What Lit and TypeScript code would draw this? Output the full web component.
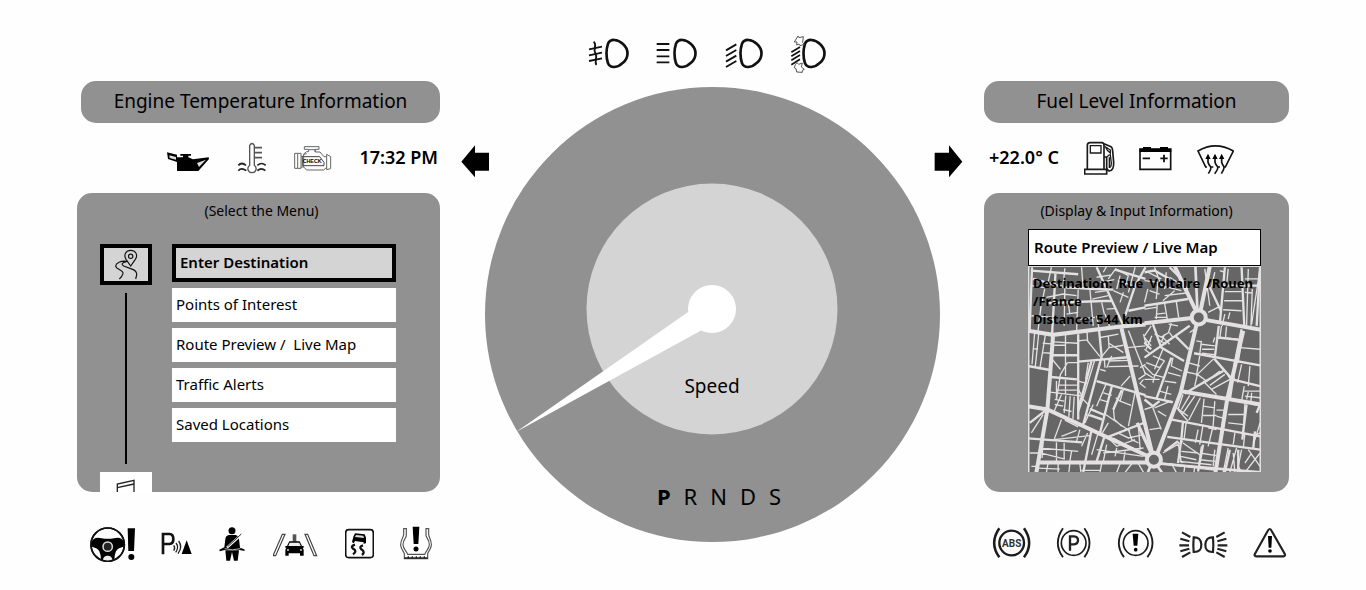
import { LitElement, html, svg, css, TemplateResult } from "lit";
import { customElement, state } from "lit/decorators.js";

const icon = (
  label: string,
  box: [number, number, number, number],
  body: TemplateResult,
) => html`<svg
  class="icon"
  role="img"
  aria-label=${label}
  viewBox=${box.join(" ")}
  width=${box[2] / 3}
  height=${box[3] / 3}
>${body}</svg>`;

const lens = (x: number) => svg`<path d="M${x + 5} 56C${x + 12} 40 ${x + 34} 42 ${x + 50} 57C${x + 68} 73 ${x + 68} 98 ${x + 50} 113C${x + 34} 129 ${x + 12} 131 ${x + 5} 115C${x - 1} 96 ${x - 1} 75 ${x + 5} 56Z" stroke-width="8"/>`;

const fog = icon("Fog lights", [54, 30, 123, 114], svg`<g fill="none" stroke="#111">${lens(109)}
  <path d="M57 73L96 65M57 91L96 83M57 108L96 100" stroke-width="5.5"/>
  <path d="M71 50C83 60 68 72 76 85S72 106 79 120" stroke-width="5.5"/></g>`);
const highBeam = icon("High beam", [258, 30, 126, 114], svg`<g fill="none" stroke="#111">${lens(313)}
  <path d="M260 57H298M260 75H298M260 94H298M260 112H298" stroke-width="5.5"/></g>`);
const lowBeam = icon("Low beam", [462, 30, 114, 114], svg`<g fill="none" stroke="#111">${lens(508)}
  <path d="M465 76L496 58M465 93L496 75M465 110L496 92M465 126L496 108" stroke-width="5.5"/></g>`);
const autoBeam = icon("Automatic headlight levelling", [663, 30, 108, 114], svg`<g fill="none" stroke="#111">${lens(703)}
  <path d="M667 82L693 66M667 94L693 78M667 106L693 90M667 119L693 103" stroke-width="5"/>
  <path d="M676 51L687 33L690 38L703 35L701 53L706 58L693 62L690 57L683 60L684 51Z" stroke-width="3" stroke="#555"/>
  <path d="M679 119L684 113L689 118L700 114L697 126L706 133L700 136V142L683 141L681 131L676 128Z" stroke-width="3" stroke="#555"/></g>`);

const oil = icon("Oil pressure", [291, 204, 132, 96], svg`<path d="M294 235L324 242V250H342V245H334V240H366V245H358V250L372 256L419 250L420 255L388 291H324V264L297 255Z"/>
  <path d="M301 244L321 249V257L302 252Z M384 267L411 257L390 279Z" fill="#ddd"/>`);
const coolant = icon("Coolant temperature", [498, 204, 87, 96], svg`<g fill="none" stroke="#555" stroke-width="4">
  <path d="M536 274V214Q543 203 550 214V274C560 282 555 296 543 296S526 282 536 274Z"/>
  <path d="M550 221H573M550 236H573M550 251H573" stroke-width="5"/>
  <path d="M502 274Q512 263 525 274M502 290Q511 279 526 290M559 274Q572 263 584 274M559 290Q571 279 583 290" stroke="#222" stroke-width="5"/></g>`);
const check = icon("Check engine", [672, 204, 117, 96], svg`<g fill="none" stroke="#666" stroke-width="3">
  <path d="M706 218H750V226H739V234H753L765 248H773V241L785 248V284L773 287V280L764 288H713L704 279H696V283H677V238H696V247H704V240L713 233H719V226H706Z"/>
  <path d="M696 247V280M686 239V282M704 247V279M773 248V280M704 241L713 239M720 227H738V234"/>
  <path d="M700 248H752L765 265V275H700Z" stroke="#444"/></g>
  <text x="701" y="268" font-family="Liberation Sans" font-weight="700" font-size="16">CHECK</text>`);
const arrowLeft = icon("Left turn signal", [1173, 210, 87, 99], svg`<path d="M1174 260L1215 211V233H1257V287H1215V307Z"/>`);
const arrowRight = icon("Right turn signal", [102, 210, 87, 99], svg`<path d="M187 260L147 211V233H104V287H147V307Z"/>`);
const fuel = icon("Fuel", [543, 198, 93, 102], svg`<g fill="none" stroke="#1a1a1a" stroke-width="5">
  <path d="M553 281V211Q553 203 561 203H596Q603 203 603 211V281M545 283H611V297H545Z"/>
  <path d="M562 212H594V234H562Z" stroke-width="4"/>
  <path d="M603 206L624 215Q629 219 629 228L632 262Q633 287 619 288Q612 287 611 277V246H603"/>
  <path d="M608 216L622 225V234L613 226ZM613 246Q616 238 622 240L625 265Q624 278 619 277V247" stroke-width="4"/></g>`);
const battery = icon("Battery", [720, 198, 99, 102], svg`<path d="M723 222H815V283H723Z" fill="none" stroke="#111" stroke-width="5"/>
  <path d="M722 221H732V216H756V221H783V216H807V221H817V231H721Z"/>
  <path d="M731 250H753M784 250H806M795 239V262" stroke="#111" stroke-width="5.500"/>`);
const defrost = icon("Windscreen defrost", [891, 198, 111, 102], svg`<g fill="none" stroke="#111" stroke-width="5">
  <path d="M921 276H917L894 228Q946 197 1000 228L976 276H971"/>
  <path d="M932 276H940M954 276H960" />
  <path d="M924 245V262Q926 269 931 274T925 296M945 245V262Q947 269 952 274T944 296M965 245V262Q967 269 971 274T964 296"/></g>
  <path d="M916 252L924 236L932 252ZM937 252L945 236L953 252ZM957 252L965 236L973 252Z"/>`);

const wheel = icon("Steering fault", [30, 33, 135, 108], svg`<circle cx="83" cy="89" r="50" fill="none" stroke="#111" stroke-width="5"/>
  <path d="M35 80Q43 64 64 70Q83 73 102 70Q123 64 132 80Q137 94 128 96Q114 99 108 109Q104 117 103 134Q83 140 63 134Q62 117 58 109Q52 99 38 96Q30 94 35 80Z"/>
  <path d="M68 137Q70 122 83 122T98 137Q83 141 68 137Z" fill="#eee"/>
  <circle cx="83" cy="95" r="14" fill="#222" stroke="#ddd" stroke-width="4.5"/>
  <circle cx="83" cy="89" r="50" fill="none" stroke="#111" stroke-width="5"/>
  <path d="M143 40H165L162 108H145Z"/><circle cx="154" cy="126" r="9"/>`);
const parkAssist = icon("Parking assist", [246, 33, 93, 108], svg`<path d="M252 118V57H272Q283 58 283 72T272 87H252" fill="none" stroke="#111" stroke-width="8"/>
  <path d="M284 91Q290 99 284 107M291 84Q301 97 290 112M299 78Q312 96 297 116" fill="none" stroke="#222" stroke-width="4"/>
  <path d="M323 76L338 117H308Z"/>`);
const belt = icon("Seat belt", [420, 33, 84, 108], svg`<circle cx="459" cy="47" r="10.500"/>
  <path d="M450 60H470Q480 63 480 73L483 98L496 103L497 108L482 105H437L422 109L421 104L436 97L439 72Q440 62 450 60Z"/>
  <path d="M439 106H480L476 137H465L459 111L453 137H442Z"/>
  <path d="M488 58L444 98" stroke="#fff" stroke-width="7"/><path d="M487 57L446 95" stroke="#222" stroke-width="3"/>
  <path d="M437 101Q459 108 484 101" fill="none" stroke="#bbb" stroke-width="3"/>`);
const lane = icon("Lane assist", [33, 33, 135, 108], svg`<path d="M61 58H69L41 122H33ZM129 58H137L164 122H156Z" fill="none" stroke="#444" stroke-width="3.5"/>
  <path d="M92 58H103V80H92Z" fill="#555"/>
  <path d="M82 79H113L120 93H125V98H122L125 104V122H114V115H80V122H70V104L73 98H70V93H75Z"/>
  <path d="M83 83H112L116 93H79Z" fill="#eee"/><circle cx="78" cy="105" r="3" fill="#ccc"/><circle cx="117" cy="105" r="3" fill="#ccc"/>`);
const skid = icon("Traction control", [240, 33, 87, 108], svg`<rect x="242" y="44" width="83" height="84" rx="9" fill="none" stroke="#111" stroke-width="5"/>
  <path d="M270 55L299 58L303 68V84L296 87V82L270 78L266 85L261 81L265 65Z"/>
  <path d="M273 60L295 62L297 69L270 66Z" fill="#ddd"/>
  <path d="M270 89Q255 94 264 101Q278 108 264 118M294 91Q281 95 289 103Q302 111 291 120" fill="none" stroke="#111" stroke-width="7"/>`);
const tyre = icon("Tyre pressure", [408, 33, 96, 108], svg`<path d="M419 41H427V61C427 70 417 73 417 89C417 101 428 108 431 118H482C485 108 496 101 496 89C496 73 487 70 486 61V41H494V58C494 67 503 74 502 91C501 103 492 110 491 116V131H421V116C420 110 411 103 410 91C409 74 419 67 419 58Z" fill="none" stroke="#555" stroke-width="3.500"/>
  <path d="M421 129H491M433 124V130M445 124V130M457 124V130M469 124V130M481 124V130" fill="none" stroke="#222" stroke-width="4"/>
  <path d="M446 35H466L463 87H449Z"/><circle cx="456" cy="102" r="7.500"/>`);

const ringed = (cx: number, arc: number, body: TemplateResult, ring = 4.5) => svg`<g fill="none" stroke="#1c1c1c">
  <circle cx=${cx} cy="84" r="37" stroke-width=${ring}/>
  <path d="M${cx - arc + 16} 40Q${cx - arc - 15} 84 ${cx - arc + 16} 127M${cx + arc - 16} 40Q${cx + arc + 15} 84 ${cx + arc - 16} 127" stroke-width=${ring + 0.5}/></g>${body}`;
const abs = icon("ABS", [36, 33, 117, 102], ringed(95, 53, svg`<text x="95" y="95" text-anchor="middle" font-family="Roboto" font-weight="700" font-size="30" fill="#333">ABS</text>`, 7));
const parking = icon("Parking brake", [228, 33, 105, 102], ringed(281, 48, svg`<path d="M270 107V64H282Q294 65 294 76T282 88H270" fill="none" stroke="#222" stroke-width="7"/>`, 5));
const brake = icon("Brake warning", [414, 33, 111, 102], ringed(470, 51, svg`<path d="M461 56H478L475 92H464Z"/><circle cx="470" cy="104" r="5.500"/>`, 5));
const sideLights = icon("Side lights", [606, 33, 147, 102], svg`<g fill="none" stroke="#222">
  <path d="M650 67Q672 66 673 89T650 111Q648 89 650 67ZM708 67Q686 66 685 89T708 111Q710 89 708 67Z" stroke-width="6.500"/>
  <path d="M615 52L640 66M610 71L637 79M607 91H636M610 109L637 101M615 126L640 112M743 52L718 66M748 71L721 79M751 91H722M748 109L721 101M743 126L718 112" stroke-width="6.500"/></g>`);
const warning = icon("Warning", [816, 33, 99, 102], svg`<path d="M866 42Q869 42 872 48L911 116Q914 123 907 124H826Q818 123 822 116L860 48Q863 42 866 42Z" fill="none" stroke="#222" stroke-width="6.500"/>
  <path d="M861 63H873L871 98H863Z"/><circle cx="867" cy="108" r="5.500"/>`);

const routeIcon = icon("Navigation", [129, 177, 75, 93], svg`<g fill="none" stroke="#111" stroke-width="3.5">
  <path d="M179 228L165 208C157 194 165 181 179 181S202 194 193 208Z"/><circle cx="179" cy="199" r="6.500"/>
  <path d="M168 214C149 211 135 219 134 228C134 238 158 240 156 251Q154 259 145 267M168 214C151 218 150 223 158 228L185 238Q198 243 197 255L194 267"/></g>`);
const mediaIcon = icon("Media", [144, 867, 60, 39], svg`<path d="M148 910V882L198 871V910M148 893L198 882" fill="none" stroke="#222" stroke-width="4"/>`);

const westStreets = svg`
  <g stroke-width="4">
    <path d="M70 5L60 50M110 8L105 60M160 5L165 70M10 60L50 66M205 35L250 28M215 50L258 42M225 20L235 2M240 40L262 10L300 30M268 45L320 62M275 30L265 70M300 30L290 60M320 5L300 80M255 75L300 95M285 80L275 110"/>
    <path d="M50 70L42 110M110 70L108 180M150 72L145 200M55 95L105 85M105 85L145 90M185 72L195 180M115 145L150 140M155 160L200 155M10 150L75 155M40 112L30 195M120 110L125 145M220 110L228 145M200 80L235 75M192 100L240 90M235 130L262 128M230 145L245 185M205 150L212 188"/>
    <path d="M20 200L12 295M32 203L22 300M52 206L35 310M44 232L70 234M42 260L68 262M15 248L30 250"/>
    <path d="M112 205V330M75 228L148 232M78 238H112M72 280L97 310M118 290L97 325M97 325L85 400M118 290H148M90 357H146M66 378L165 390M85 345V400M112 340V385M85 372H146M80 400L108 405M100 385L78 435M113 388L108 440M126 390L122 452M138 392L134 458M80 415L105 420M105 430L130 436"/>
    <path d="M176 195L178 225L215 272M150 225L176 222M216 215L270 205M240 212L242 245L220 272M242 232L285 260M242 245L285 238M250 270L235 305M215 310L232 315M240 302L330 300M240 285L300 283M228 280L230 305M150 345L175 352M150 370L165 395L150 440M200 280L165 395M180 290L172 340M160 395L185 420"/>
    <path d="M300 195L351 325M295 245L351 240M335 305L351 295M330 340L351 325M305 330L278 360M345 205L351 230M345 340L335 352L351 365"/>
    <path d="M235 350L205 420M225 380L250 388M213 400L240 408M285 370L275 405L308 418M275 405L262 395M320 378L300 480M255 425L258 460L280 480M262 410L255 430M232 445L305 495M185 445L222 458M195 415L170 470M175 445L222 462M240 470L222 500"/>
    <path d="M100 460L78 520M110 462L150 482M100 510L145 492M78 520L185 508M45 445L10 500M155 490L145 525M178 500L160 540M208 505L190 565M225 560L345 545M205 550L345 570M255 515L300 540M268 500L300 515L345 505M300 490L310 520L330 530M330 480L335 550M245 520L265 540L320 520M235 535L225 585M265 545L260 570M290 555L285 588"/>
    <path d="M45 525L42 575M85 528V585M108 530V578M35 545L150 555M40 560L110 578M130 555L125 585M5 560H30M10 600H25M60 590L55 618M90 592V618M125 592L122 618M155 592L158 618M220 592L215 618M30 605L95 608M275 592L265 618M310 592L290 618M160 612H215M330 592L345 618"/>
  </g>
  <g stroke-width="7">
    <path d="M12 5L5 190M10 15L150 26M15 40L110 65L200 70L255 72M205 5L285 180M82 25L72 205M60 112L160 108L250 105M351 5L320 60L290 150M300 135L351 125M260 12L351 40"/>
    <path d="M0 300L66 312M72 268H148M68 333L146 340M150 205V460M150 287L298 274M212 190L220 272L165 475M190 285L150 430M205 345L351 387M250 362L213 508M280 372L255 430M232 515L351 468M185 428L232 448M0 516L162 528M190 490L165 618M228 512L205 585M5 470L50 435"/>
  </g>
  <path d="M0 195L75 207L278 182L351 176M75 207L58 430L25 618M278 182L325 375L372 565M0 420L58 430L370 575M30 588H355" stroke-width="12"/>`;

const eastStreets = svg`
  <g stroke-width="4">
    <path d="M10 20L50 40M30 5L50 60M65 20L60 70M0 45L40 50L35 100M60 90L125 82M55 105L90 75M90 10L100 30M75 35L130 70M50 60L110 75M10 70L0 110M38 115L35 160M60 112L68 160M95 108L102 155M35 145L62 142M0 130L35 125M30 155H65M15 75L45 85"/>
    <path d="M190 140L225 122M180 10L195 120M200 65L210 20M240 78H290M238 105H292M235 132L290 135M250 10L245 60M310 10L305 180M322 70L318 180M345 10L320 175M240 145L232 180M300 80L322 82M225 15L240 20M300 40H345M255 140L250 160"/>
    <path d="M80 172L72 200L48 215M72 175L100 180M30 205L55 215L75 235M60 205L50 230M75 200L85 215M40 220L65 235M20 180L0 210M0 215L20 240M0 250L15 262M22 210L5 250M20 225L0 230"/>
    <path d="M55 250L30 310M0 300L25 325L60 335M5 290L45 305M25 270L60 285M50 300L30 330L25 350M60 285L45 305M0 340H45M85 275L80 300L112 315M70 320L108 330M60 345L95 350M45 375L80 385M70 360L60 400M50 400L82 410M0 320L25 335"/>
    <path d="M170 225L165 265M170 235L210 240M172 250H208M172 262L208 266M205 230L210 215M230 180L225 215M245 182L242 215M225 215L280 220M285 245L345 250M295 195L280 290M135 200L150 190M155 225L172 228"/>
    <path d="M165 270L155 330M207 278L158 325L185 345M130 290L165 300M125 318L158 325M158 325L150 360M175 345L215 385M225 315L180 350M240 325L195 358M265 335L200 370M250 330L262 345M290 295L278 350M315 300L310 360M265 330L270 345M298 360L290 405M320 380L318 405M298 375H345M300 390L345 395M310 378L305 400"/>
    <path d="M115 385L100 430L130 465M135 388L110 430M150 390L112 445M167 395L132 462M178 398L170 470M90 420L130 450M210 405L205 480M175 448H215M175 420L210 425M215 432H235M215 450L232 455M300 412L295 495M250 445H298M325 415L345 418M345 470L330 520M345 500L325 510M250 470L297 475"/>
    <path d="M125 465L118 520M175 475L165 535M205 480L190 540M160 490L152 530M190 485L215 490M30 425L78 405M25 425L50 490M0 430L30 420M15 490L50 485M40 435L65 450M270 500L265 535M300 500L295 545"/>
    <path d="M55 560L115 525M100 525L110 590M115 530L165 565M110 555L160 560M108 570L155 580M105 585L200 595M170 540L160 610M165 560L215 568M165 580L212 585M210 550L205 600M250 545L235 618M275 545L255 618M290 550L280 600L290 618M310 550L345 600M345 560L300 618M265 560L270 618M320 560L300 590M120 600L118 618M150 600L148 618M80 590L95 618"/>
  </g>
  <g stroke-width="7">
    <path d="M0 20L30 15L75 40M0 120L130 100M240 5L225 175M290 5L298 180M345 5L335 180M195 65L228 135M235 60H345M75 5L105 35"/>
    <path d="M0 275L135 180M25 175L50 245L118 285M92 210L132 250M148 262L345 298M222 180L210 275M220 215L282 222M290 190L268 300M80 275L35 400M0 390L85 408M120 382L235 315M208 278L262 340M262 340L345 360M270 300L255 400M0 230L20 250"/>
    <path d="M82 460L345 510M68 512L345 550M240 430L230 500M305 415L292 520M110 520L100 590M175 535L160 615M45 590L215 610M345 415L335 440M0 400L25 420L45 405M60 555L100 525M330 495L325 545M255 550L240 618M280 550V618M115 465L110 520"/>
  </g>
  <path d="M0 172L142 157M186 163L348 192M155 178L108 380L38 562M90 2L152 132M195 2L168 132M106 375L348 415M295 195L247 400L212 618" stroke-width="12"/>
  <path d="M152 2L158 130M48 592L348 618M38 598L52 618M18 598L10 618" stroke-width="8"/>
  <path d="M-22 470L20 560" stroke-width="10"/>`;

const map = html`<svg class="map" role="img" aria-label="Street map" viewBox="0 0 696 618" preserveAspectRatio="xMidYMid slice">
  <rect width="696" height="618" fill="#666"/>
  <g fill="none" stroke="#e3e1e1">
    ${westStreets}
    <g transform="translate(348 0)">${eastStreets}</g>
    <g fill="#666" stroke-width="12"><circle cx="510" cy="155" r="21"/><circle cx="376" cy="580" r="21"/></g>
    <path d="M2 0V618M694 0V618M0 2H696" stroke-width="5"/>
  </g>
</svg>`;

@customElement("app-root")
export class AppRoot extends LitElement {
  static styles = css`
    :host {
      display: block;
      min-height: 100vh;
      background: #fefefe;
      color: #000;
      font-family: "Noto Sans", sans-serif;
      font-size: 15px;
    }
    * { box-sizing: border-box; }
    h1, h2, p, ul { margin: 0; padding: 0; font-weight: inherit; list-style: none; }
    button { font: inherit; color: inherit; border: 0; border-radius: 0; padding: 0; text-align: left; cursor: pointer; }
    svg { display: block; flex: none; }
    .cluster {
      display: grid;
      grid-template-columns: 363fr 544fr 305fr;
      align-items: start;
      padding: 35px 77px 0;
    }
    .side { display: flex; flex-direction: column; padding-top: 46px; }
    .title {
      height: 42px;
      border-radius: 15px;
      background: #919191;
      font-size: 19px;
      line-height: 41px;
      text-align: center;
    }
    .left .title { margin-left: 4px; }
    .status { display: flex; align-items: center; height: 70px; }
    .left .status { justify-content: flex-end; gap: 27px; padding-right: 2px; }
    .right .status { justify-content: space-between; padding: 0 55px 0 5px; }
    .reading { font-size: 18px; font-weight: 600; line-height: 24px; padding-bottom: 2px; white-space: nowrap; }
    .panel { height: 299px; border-radius: 15px; background: #919191; overflow: hidden; }
    .hint { padding-top: 8px; font-size: 14px; line-height: 20px; text-align: center; }
    .left .hint { padding-left: 6px; }
    .menu { display: flex; align-items: flex-start; gap: 20px; padding: 23px 44px 0 23px; }
    .rail { display: flex; flex-direction: column; align-items: center; gap: 8px; }
    .tab { display: flex; justify-content: center; width: 52px; height: 41px; background: #fff; }
    .tab.on { align-items: center; background: #d4d4d4; border: 4px solid #000; }
    .tab.cut { height: 20px; padding-top: 7px; overflow: hidden; }
    .line { width: 2px; height: 171px; background: #000; }
    .items { display: flex; flex-direction: column; gap: 6px; flex: 1; }
    .item { display: block; width: 100%; height: 34px; padding: 0 4px 2px; background: #fff; white-space: pre; }
    .item.on { height: 38px; background: #d4d4d4; border: 4px solid #000; font-weight: 600; }
    .preview { margin: 8px 28px 0 44px; }
    .preview h2 { height: 37px; padding-left: 5px; border: 1px solid #000; background: #fff; font-size: 15px; font-weight: 600; line-height: 35px; }
    .view { display: grid; }
    .view > * { grid-area: 1 / 1; }
    .map { width: 100%; height: 206px; }
    .route { padding: 8px 8px 0 5px; font-size: 13px; font-weight: 700; line-height: 18px; text-align: justify; z-index: 1; }
    .lamps { display: flex; align-items: flex-start; justify-content: space-between; height: 36px; margin-top: 34px; }
    .left .lamps { padding: 0 8px 0 13px; }
    .right .lamps { padding: 0 3px 0 8px; }
    .center { display: flex; flex-direction: column; }
    .beams { display: flex; align-self: center; gap: 27px; padding-right: 10px; }
    .stage { display: grid; grid-template-columns: auto 1fr auto; padding: 14px 21px 0; }
    .stage > * { grid-row: 1; }
    .stage .icon { margin-top: 58px; z-index: 1; }
    .turn-left { grid-column: 1; }
    .turn-right { grid-column: 3; }
    .dial { display: grid; grid-column: 1 / -1; justify-self: center; justify-items: center; }
    .dial > * { grid-area: 1 / 1; }
    .face { width: 455px; height: 455px; }
    .speed { padding-top: 285px; font-size: 19px; line-height: 28px; }
    .gears { display: flex; gap: 13px; padding: 393px 0 0 14px; font-size: 22px; line-height: 32px; }
    .gears .on { font-weight: 700; }
  `;

  @state() private selected = 0;

  private entries = [
    "Enter Destination",
    "Points of Interest",
    "Route Preview /  Live Map",
    "Traffic Alerts",
    "Saved Locations",
  ];

  render() {
    return html`<main class="cluster">
      <section class="side left">
        <h1 class="title">Engine Temperature Information</h1>
        <div class="status">${oil}${coolant}${check}<span class="reading">17:32 PM</span></div>
        <div class="panel">
          <p class="hint">(Select the Menu)</p>
          <div class="menu">
            <nav class="rail" aria-label="Sections">
              <button class="tab on">${routeIcon}</button>
              <span class="line"></span>
              <button class="tab cut">${mediaIcon}</button>
            </nav>
            <ul class="items">
              ${this.entries.map((entry, i) => html`<li><button
                class="item ${i === this.selected ? "on" : ""}"
                @click=${() => (this.selected = i)}
              >${entry}</button></li>`)}
            </ul>
          </div>
        </div>
        <div class="lamps">${wheel}${parkAssist}${belt}${lane}${skid}${tyre}</div>
      </section>

      <section class="center">
        <div class="beams">${fog}${highBeam}${lowBeam}${autoBeam}</div>
        <div class="stage">
          <div class="turn-left">${arrowLeft}</div>
          <div class="dial">
            <svg class="face" viewBox="0 0 455 455" role="img" aria-label="Speedometer">
              <circle cx="227.500" cy="227.500" r="227.500" fill="#919191"/>
              <circle cx="227" cy="222" r="125.500" fill="#d4d4d4"/>
              <path d="M31 345L206 223L217 243Z" fill="#fff"/>
              <circle cx="227" cy="222" r="24" fill="#fff"/>
            </svg>
            <p class="speed">Speed</p>
            <p class="gears"><span class="on">P</span><span>R</span><span>N</span><span>D</span><span>S</span></p>
          </div>
          <div class="turn-right">${arrowRight}</div>
        </div>
      </section>

      <section class="side right">
        <h1 class="title">Fuel Level Information</h1>
        <div class="status"><span class="reading">+22.0° C</span>${fuel}${battery}${defrost}</div>
        <div class="panel">
          <p class="hint">(Display &amp; Input Information)</p>
          <div class="preview">
            <h2>Route Preview / Live Map</h2>
            <div class="view">
              ${map}
              <div class="route">
                <p>Destination: Rue Voltaire /Rouen /France</p>
                <p>Distance: 544 km</p>
              </div>
            </div>
          </div>
        </div>
        <div class="lamps">${abs}${parking}${brake}${sideLights}${warning}</div>
      </section>
    </main>`;
  }
}
